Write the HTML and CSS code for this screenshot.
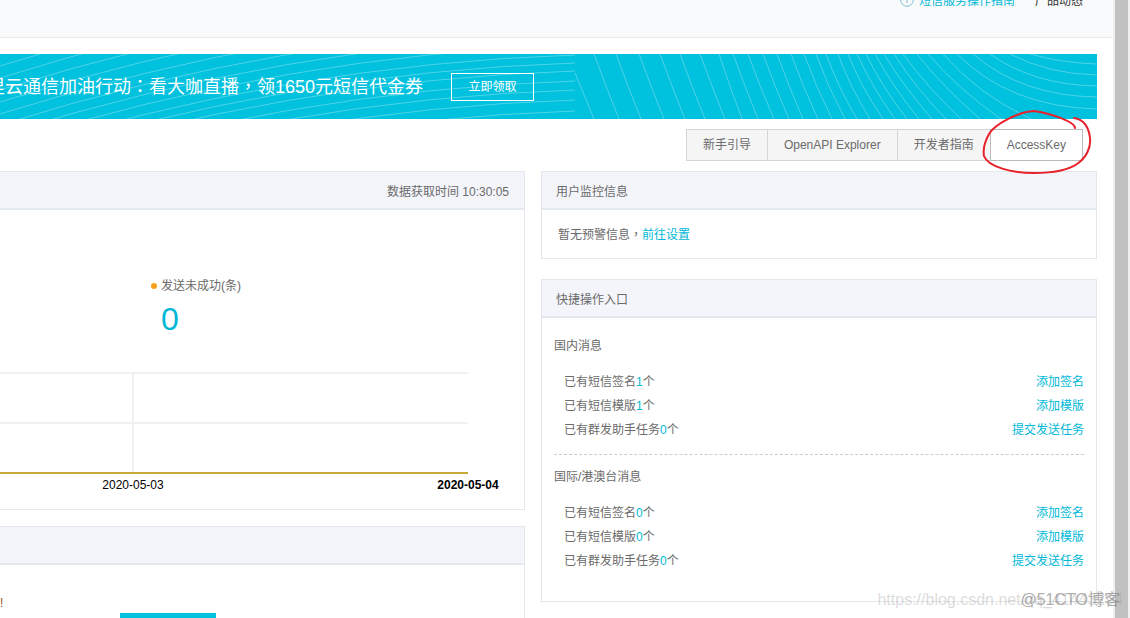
FILE: index.html
```html
<!DOCTYPE html>
<html lang="zh-CN">
<head>
<meta charset="utf-8">
<title>短信服务</title>
<link rel="stylesheet" href="styles.css">
</head>
<body>
<div class="page">
  <header class="topbar">
    <a class="topbar-link guide" href="#">
      <svg class="guide-icon" width="14" height="14" viewBox="0 0 14 14" aria-hidden="true"><circle cx="7" cy="6" r="6.3"/><path d="M7 9V6"/></svg>
      短信服务操作指南</a>
    <a class="topbar-link" href="#">产品动态</a>
  </header>

  <main class="content">
    <section class="banner">
      <svg class="banner-lines" viewBox="0 0 1097 65" preserveAspectRatio="xMaxYMid slice" aria-hidden="true">
        <path d="M575 57q-287 9-575 100M575 46q-287 9-575 100M575 36q-287 9-575 100M575 27q-287 9-575 100M575 17q-287 9-575 100M575 9q-287 9-575 100M575 1q-287 9-575 100M575-9q-287 9-575 100M575-19q-287 9-575 100M575-29q-287 9-575 100M575-40q-287 9-575 100M575-52q-287 9-575 100M575-64q-287 9-575 100M575-76q-287 9-575 100M575-88q-287 9-575 100"/>
        <path d="M575 19L594 65M594 0q12 33 25 65M616 0q12 33 25 65M639 0q12 33 25 65M660 0q12 33 25 65M680 0q12 33 25 65M700 0q12 33 25 65M719 0q11 33 23 65M733 0q12 33 25 65M748 0q12 33 26 65M763 0q12 33 26 65M777 0q12 33 26 65M791 0q12 33 27 65M804 0q12 33 28 65M816 0q12 33 29 65M826 0q12 33 31 65M838 0q12 33 32 65M848 0q13 33 35 65M857 0q15 33 38 65M866 0q16 33 41 65M875 0q18 33 44 65M884 0q20 33 48 65M894 0q21 33 52 65M903 0q24 33 58 65M917 0q26 33 63 65M928 0q31 36 73 65M943 0q36 41 88 65M957 0q53 53 140 55M973 0q49 42 124 43M990 0q44 31 107 32M1010 0q38 20 87 21M1030 0q32 9 67 10"/>
      </svg>
      <p class="banner-text">阿里云通信加油行动<span lang="zh-TW">：</span>看大咖直播<span lang="zh-TW">，</span>领1650元短信代金券</p>
      <button class="banner-button" type="button">立即领取</button>
    </section>

    <nav class="tabs">
      <button class="tab" type="button">新手引导</button>
      <button class="tab" type="button">OpenAPI Explorer</button>
      <button class="tab" type="button">开发者指南</button>
      <button class="tab tab-key" type="button">AccessKey
        <svg class="marker" width="112" height="68" viewBox="980 108 112 68" aria-hidden="true"><path d="M1075 128C1075 122 1053 114 1034 111C1018 112 995 124 989 134C984 143 983 150 984 156C988 167 1012 173 1034 173C1052 173 1067 171 1077 164C1087 157 1091 147 1090 138C1089 128 1084 119 1074 118"/></svg>
      </button>
    </nav>

    <div class="columns">
      <div class="column">
        <section class="panel panel-left">
          <div class="panel-head head-time">数据获取时间 10:30:05</div>
          <div class="stats">
            <div class="stat-label">发送未成功(条)</div>
            <div class="stat-value">0</div>
          </div>
          <svg class="chart" viewBox="0 0 524 137" role="img" aria-label="发送未成功">
            <path class="grid" d="M0 1H468M0 51H468M133 1V100"/>
            <path class="series" d="M0 101H468"/>
            <text x="133" y="117">2020-05-03</text>
            <text class="last" x="468" y="117">2020-05-04</text>
          </svg>
        </section>
        <section class="panel panel-left">
          <div class="panel-head"></div>
          <div class="notice">!</div>
          <button class="primary" type="button" aria-label="提交"></button>
        </section>
      </div>

      <div class="column column-right">
        <section class="panel">
          <h2 class="panel-head">用户监控信息</h2>
          <p class="alert-text">暂无预警信息<span class="center-mark" lang="zh-TW">，</span><a href="#">前往设置</a></p>
        </section>
        <section class="panel">
          <h2 class="panel-head">快捷操作入口</h2>
          <div class="group">
            <h3 class="group-title">国内消息</h3>
            <ul class="rows">
              <li><span>已有短信签名<a href="#">1</a>个</span><a href="#">添加签名</a></li>
              <li><span>已有短信模版<a href="#">1</a>个</span><a href="#">添加模版</a></li>
              <li><span>已有群发助手任务<a href="#">0</a>个</span><a href="#">提交发送任务</a></li>
            </ul>
          </div>
          <div class="group">
            <h3 class="group-title">国际/港澳台消息</h3>
            <ul class="rows">
              <li><span>已有短信签名<a href="#">0</a>个</span><a href="#">添加签名</a></li>
              <li><span>已有短信模版<a href="#">0</a>个</span><a href="#">添加模版</a></li>
              <li><span>已有群发助手任务<a href="#">0</a>个</span><a href="#">提交发送任务</a></li>
            </ul>
          </div>
        </section>
      </div>
    </div>
  </main>
</div>
<div class="scrollbar"></div>
<div class="watermark source">https://blog.csdn.net/qq_41443294</div>
<div class="watermark owner">@51CTO博客</div>
</body>
</html>
```
FILE: styles.css
```css
* { box-sizing: border-box; }

body {
  margin: 0;
  height: 100vh;
  overflow: hidden;
  display: flex;
  position: relative;
  background: #fff;
  color: #6a6a6a;
  font: 12px/18px "Liberation Sans", "Noto Sans CJK SC", sans-serif;
}

h2, h3, p, ul { margin: 0; padding: 0; font-size: 12px; font-weight: 400; }
ul { list-style: none; }
a { color: #00b7d8; text-decoration: none; }
button { font: inherit; color: inherit; margin: 0; }

.page { flex: 1; min-width: 0; height: 100vh; overflow: hidden; }

.scrollbar {
  width: 17px;
  border: solid #f0f0f0;
  border-width: 0 2px;
  background: #c1c1c1;
}

.topbar {
  display: flex;
  justify-content: flex-end;
  gap: 20px;
  height: 38px;
  padding-right: 30px;
  background: #f9fafc;
  border-bottom: 1px solid #ebebeb;
}
.topbar-link { color: #333; margin-top: -8px; height: 18px; white-space: nowrap; }
.guide { display: flex; align-items: center; gap: 5px; color: #00b7d8; }
.guide-icon { fill: none; stroke: #7fbfd9; }

.content { padding: 16px 16px 0 0; }

.banner {
  position: relative;
  display: flex;
  align-items: center;
  gap: 28px;
  height: 65px;
  overflow: hidden;
  background: #00c1de;
  color: #fff;
}
.banner-lines {
  position: absolute;
  inset: 0;
  width: 100%;
  height: 100%;
  fill: none;
  stroke: #fff;
  stroke-opacity: .3;
}
.banner-text {
  position: relative;
  margin-left: -31px;
  font-size: 18px;
  line-height: 26px;
  white-space: nowrap;
}
.banner-text span, .center-mark { font-family: "Noto Sans CJK TC", sans-serif; line-height: 1; }
.banner-button {
  position: relative;
  width: 83px;
  height: 28px;
  padding: 1px 0 0;
  background: none;
  border: 1px solid #fff;
}

.tabs { display: flex; justify-content: flex-end; padding: 10px 14px; }
.tab {
  height: 32px;
  padding: 0 16px;
  background: #f5f5f5;
  border: 1px solid #d5d5d5;
  border-right: 0;
  white-space: nowrap;
}
.tab-key { position: relative; background: #fff; border: 1px solid #bbb; }
.marker {
  position: absolute;
  left: -11px;
  top: -22px;
  fill: none;
  stroke: #e8202a;
  stroke-width: 2;
  stroke-linecap: round;
  pointer-events: none;
}

.columns { display: grid; grid-template-columns: 525fr 556fr; gap: 16px; }
.column { display: flex; flex-direction: column; gap: 16px; min-width: 0; }
.column-right { gap: 20px; }

.panel { border: 1px solid #e4e8ec; }
.panel-left { border-left: 0; }
.panel-head {
  height: 38px;
  padding: 0 14px;
  line-height: 40px;
  background: #f4f5fa;
  border-bottom: 2px solid #e4e9ee;
}
.head-time { padding-right: 15px; text-align: right; }

.stats { padding: 67px 0 0 151px; }
.stat-label { display: flex; align-items: center; gap: 4px; }
.stat-label::before {
  content: "";
  width: 6px;
  height: 6px;
  border-radius: 50%;
  background: #f9a11b;
}
.stat-value { padding-left: 10px; font-size: 32px; line-height: 48px; color: #00b7d8; }

.chart { display: block; width: 100%; margin-top: 29px; }
.chart text { fill: #000; font-size: 12px; text-anchor: middle; }
.chart .last { font-weight: 700; }
.grid { fill: none; stroke: #f0f0f0; stroke-width: 2; }
.series { fill: none; stroke: #c9a937; stroke-width: 2; }

.notice { padding-top: 29px; color: #a0522d; }
.primary {
  display: block;
  width: 96px;
  height: 32px;
  margin: 1px 0 20px 120px;
  background: #00c1de;
  border: 0;
}

.alert-text { padding: 16px 16px 14px; }

.group { margin: 0 12px; padding-top: 19px; }
.group + .group { padding: 13px 0 28px; border-top: 1px dashed #ccc; }
.group-title { margin-bottom: 15px; }
.group .rows { padding-left: 10px; }
.group:not(:last-child) .rows { padding-bottom: 12px; }
.rows li { display: flex; justify-content: space-between; line-height: 24px; }

.watermark { position: absolute; white-space: nowrap; font-size: 16px; line-height: 20px; pointer-events: none; }
.source { right: 7px; bottom: 8px; color: rgba(150, 150, 150, .35); }
.owner { right: 10px; bottom: 8px; color: rgba(120, 120, 120, .6); }
```
